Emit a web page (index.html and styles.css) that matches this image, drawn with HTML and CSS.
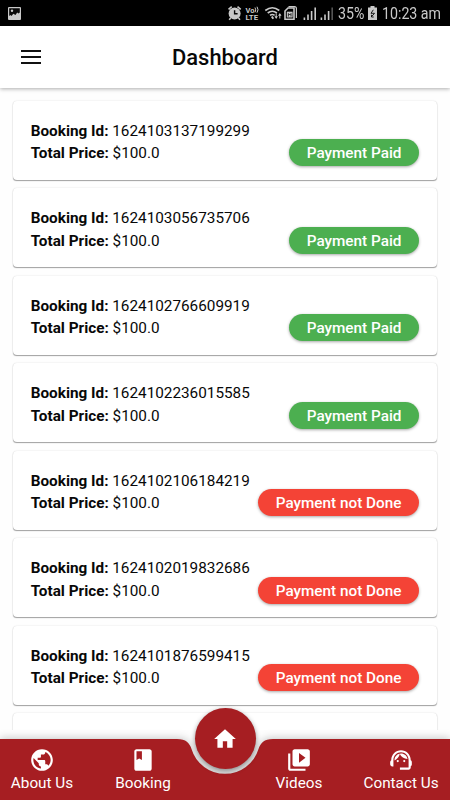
FILE: index.html
```html
<!DOCTYPE html>
<html lang="en">
<head>
<meta charset="utf-8">
<title>Dashboard</title>
<link rel="stylesheet" href="styles.css">
</head>
<body>
<div class="app">
  <div class="status">
    <svg class="status-photo" width="13" height="13" viewBox="0 0 13 13"><rect width="13" height="13" rx="1" fill="#c9c9c9"/><path d="M1.200 1.200h10.600v4.200L10.500 6.500 9.200 5.400 7.500 8 5.300 6.800 3.500 9 2.500 8 1.200 9z" fill="#080808"/><circle cx="4" cy="3.800" r="1.200" fill="#c9c9c9"/></svg>
    <svg class="status-icons" width="106" height="26" viewBox="228 0 106 26" fill="none" stroke="#c9c9c9" stroke-width="1.200">
      <circle cx="234.600" cy="13.600" r="6" fill="#c9c9c9" stroke="none"/>
      <path d="M228.500 9.400l3.200-2.800M240.700 9.400l-3.200-2.800M230.700 18l-1.500 1.700M238.500 18l1.500 1.700" stroke-width="1.600"/>
      <path d="M234.600 10.300v3.500h3" stroke="#080808" stroke-width="1.400"/>
      <text class="volte" x="245.500" y="12.500" textLength="9" lengthAdjust="spacingAndGlyphs">Vo</text>
      <text class="volte" x="245.500" y="20" textLength="12.500" lengthAdjust="spacingAndGlyphs">LTE</text>
      <path d="M255 7.500q1.500 2.300 0 4.800M257 6.700q2 3 0 6" stroke-width="1"/>
      <path d="M265.300 10.500q7-5.500 14 0M267.700 13q4.600-3.500 9.200 0M270 15.400q2.300-1.700 4.600 0" stroke-width="1.600"/>
      <path d="M271.800 16.500l1.500 2.200" stroke-width="2"/>
      <path d="M276.200 13.500v4M279.800 18.500v-4" stroke-width="1"/>
      <path d="M274.500 16.300h3.400l-1.700 2.700zM278.100 15.800h3.400l-1.700-2.700z" fill="#c9c9c9" stroke="none"/>
      <path d="M285 11l3-3h6v11.300h-9z" stroke-width="1.600"/>
      <path d="M288.500 6.700h6q1.900 0 1.900 1.900v9.400" stroke-width="1.200"/>
      <rect x="286.800" y="11.700" width="5.800" height="5.800" fill="#c9c9c9" stroke="none"/>
      <path d="M288.400 16.500v-3l1.300 1.500 1.300-1.500v3" stroke="#080808" stroke-width=".8"/>
      <path d="M304.400 20v-2.500M308 20v-5.500M311.600 20v-9M315.200 20V7.500M321.400 20v-2.500M325 20v-5.500M328.600 20v-9" stroke-width="1.600"/>
      <path d="M332.200 20V7.500" stroke="#555" stroke-width="1.600"/>
    </svg>
    <span class="battery-text">35%</span>
    <svg class="battery" width="9" height="14" viewBox="0 0 9 14"><path d="M2.500 0h4v1.500H9V14H0V1.500h2.500z" fill="#c9c9c9"/><path d="M5.300 3.800L3 7.300h3.500L3.700 10.500M3.500 8.800v2.200h2.200" fill="none" stroke="#080808" stroke-width=".9"/></svg>
    <span class="clock">10:23 am</span>
  </div>
  <header class="header">
    <svg class="menu" width="20" height="14" viewBox="0 0 20 14"><path d="M0 1h20M0 7h20M0 13h20" stroke="#111" stroke-width="1.800"/></svg>
    <h1>Dashboard</h1>
  </header>
  <main class="list">
    <article class="card"><div class="info"><p><b>Booking Id:</b> 1624103137199299</p><p><b>Total Price:</b> $100.0</p></div><span class="pill paid">Payment Paid</span></article>
    <article class="card"><div class="info"><p><b>Booking Id:</b> 1624103056735706</p><p><b>Total Price:</b> $100.0</p></div><span class="pill paid">Payment Paid</span></article>
    <article class="card"><div class="info"><p><b>Booking Id:</b> 1624102766609919</p><p><b>Total Price:</b> $100.0</p></div><span class="pill paid">Payment Paid</span></article>
    <article class="card"><div class="info"><p><b>Booking Id:</b> 1624102236015585</p><p><b>Total Price:</b> $100.0</p></div><span class="pill paid">Payment Paid</span></article>
    <article class="card"><div class="info"><p><b>Booking Id:</b> 1624102106184219</p><p><b>Total Price:</b> $100.0</p></div><span class="pill due">Payment not Done</span></article>
    <article class="card"><div class="info"><p><b>Booking Id:</b> 1624102019832686</p><p><b>Total Price:</b> $100.0</p></div><span class="pill due">Payment not Done</span></article>
    <article class="card"><div class="info"><p><b>Booking Id:</b> 1624101876599415</p><p><b>Total Price:</b> $100.0</p></div><span class="pill due">Payment not Done</span></article>
    <article class="card"></article>
  </main>
  <nav class="nav">
    <svg class="nav-bg" width="450" height="61" viewBox="0 0 450 61"><path d="M0 0H177C186 0 189.500 4 191.500 10A35 35 0 0 0 258.500 10C260.500 4 264 0 273 0H450V61H0z" fill="#a61e22"/></svg>
    <a class="tab about"><svg viewBox="0 0 24 24"><path d="M12 2C6.480 2 2 6.480 2 12s4.480 10 10 10 10-4.480 10-10S17.520 2 12 2zm-1 17.930c-3.950-.490-7-3.850-7-7.930 0-.620.080-1.210.210-1.790L9 15v1c0 1.100.900 2 2 2v1.930zm6.900-2.540c-.260-.810-1-1.390-1.900-1.390h-1v-3c0-.550-.450-1-1-1H8v-2h2c.550 0 1-.450 1-1V7h2c1.100 0 2-.900 2-2v-.410c2.930 1.190 5 4.060 5 7.410 0 2.080-.800 3.970-2.100 5.390z"/></svg><span>About Us</span></a>
    <a class="tab booking"><svg viewBox="0 0 24 24"><path d="M18 2H6c-1.100 0-2 .900-2 2v16c0 1.100.900 2 2 2h12c1.100 0 2-.900 2-2V4c0-1.100-.900-2-2-2zM6 4h5v8l-2.500-1.500L6 12V4z"/></svg><span>Booking</span></a>
    <a class="tab videos"><svg viewBox="0 0 24 24"><path d="M4 6H2v14c0 1.100.900 2 2 2h14v-2H4V6zm16-4H8c-1.100 0-2 .900-2 2v12c0 1.100.900 2 2 2h12c1.100 0 2-.900 2-2V4c0-1.100-.900-2-2-2zm-8 12.500v-9l6 4.500-6 4.500z"/></svg><span>Videos</span></a>
    <a class="tab contact"><svg viewBox="0 0 24 24"><path d="M21 12.220C21 6.730 16.740 3 12 3c-4.690 0-9 3.650-9 9.280-.600.340-1 .980-1 1.720v2c0 1.100.900 2 2 2h1v-6.100c0-3.870 3.130-7 7-7s7 3.130 7 7V19h-8v2h8c1.100 0 2-.900 2-2v-1.220c.590-.310 1-.920 1-1.640v-2.300c0-.700-.410-1.310-1-1.620z"/><circle cx="9" cy="13" r="1"/><circle cx="15" cy="13" r="1"/><path d="M18 11.030C17.520 8.180 15.040 6 12.050 6c-3.030 0-6.290 2.510-6.030 6.450 2.470-1.010 4.330-3.210 4.860-5.890 1.310 2.630 4 4.440 7.120 4.470z"/></svg><span>Contact Us</span></a>
    <a class="home"><svg viewBox="0 0 24 24"><path d="M10 20v-6h4v6h5v-8h3L12 3 2 12h3v8z"/></svg></a>
  </nav>
</div>
</body>
</html>
```
FILE: styles.css
```css
* { box-sizing: border-box; margin: 0; padding: 0; }
body { width: 450px; height: 800px; overflow: hidden; background: #fff; font-family: Roboto, "Liberation Sans", sans-serif; color: #080808; }
.app { width: 450px; height: 800px; display: flex; flex-direction: column; background: #fefefe; }
.status { height: 26px; flex: none; background: #000; color: #c9c9c9; display: flex; align-items: center; padding: 0 9px 0 8px; line-height: 26px; white-space: nowrap; }
.status-photo { flex: none; }
.status-icons { flex: none; margin-left: 207px; }
.volte { font: 700 8px Roboto, sans-serif; fill: #c9c9c9; stroke: none; }
.battery-text, .clock { flex: none; font-size: 16.500px; padding-top: 2px; transform: scaleX(.86); transform-origin: 0 50%; }
.battery-text { width: 27px; margin-left: 3.500px; }
.battery { flex: none; margin-left: 3.500px; }
.clock { width: 58px; margin-left: 4.500px; }
.header { height: 61.500px; flex: none; position: relative; z-index: 2; background: #fff; box-shadow: 0 1px 4px rgba(0, 0, 0, .32); display: grid; grid-template-columns: 42px 1fr 42px; align-items: center; }
.menu { margin-left: 21px; }
h1 { text-align: center; font-size: 21.900px; font-weight: 500; line-height: 26px; padding-top: 3px; }
.list { height: 642.500px; flex: none; overflow: hidden; padding: 13px 13px 0; display: flex; flex-direction: column; gap: 8.500px; }
.card { height: 79px; flex: none; background: #fff; border-radius: 4px; box-shadow: 0 1px 1px -.5px rgba(0, 0, 0, .35), 0 0 1.500px rgba(0, 0, 0, .16); display: flex; justify-content: space-between; align-items: flex-start; padding: 19px 18px 0 17.700px; }
.info { font-size: 15.300px; line-height: 22.500px; white-space: nowrap; }
.info b { font-weight: 700; }
.pill { height: 27px; margin-top: 19.500px; padding: 0 17.600px; border-radius: 14px; color: #fff; font-size: 15.300px; font-weight: 500; line-height: 28px; white-space: nowrap; box-shadow: 0 1px 3px rgba(0, 0, 0, .35); }
.paid { background: #4caf50; }
.due { background: #f44336; }
.nav { height: 70px; flex: none; position: relative; z-index: 3; padding-top: 9px; display: grid; grid-template-columns: 84px 118px 46px 101px 101px; color: #fff; }
.nav-bg { position: absolute; left: 0; top: 9px; overflow: visible; filter: drop-shadow(0 -1px 4px rgba(0, 0, 0, .22)); }
.tab { position: relative; display: flex; flex-direction: column; align-items: center; padding-top: 8px; font-size: 15.300px; line-height: 20px; white-space: nowrap; }
.tab svg, .home svg { width: 26px; height: 26px; fill: #fff; }
.videos { grid-column: 4; margin-left: 1px; }
.contact { grid-column: 5; margin-left: 3px; }
.home { position: absolute; left: 194.500px; top: -22px; width: 61px; height: 61px; border-radius: 50%; background: #a61e22; display: flex; align-items: center; justify-content: center; box-shadow: 0 2px 5px rgba(0, 0, 0, .45); }
```
